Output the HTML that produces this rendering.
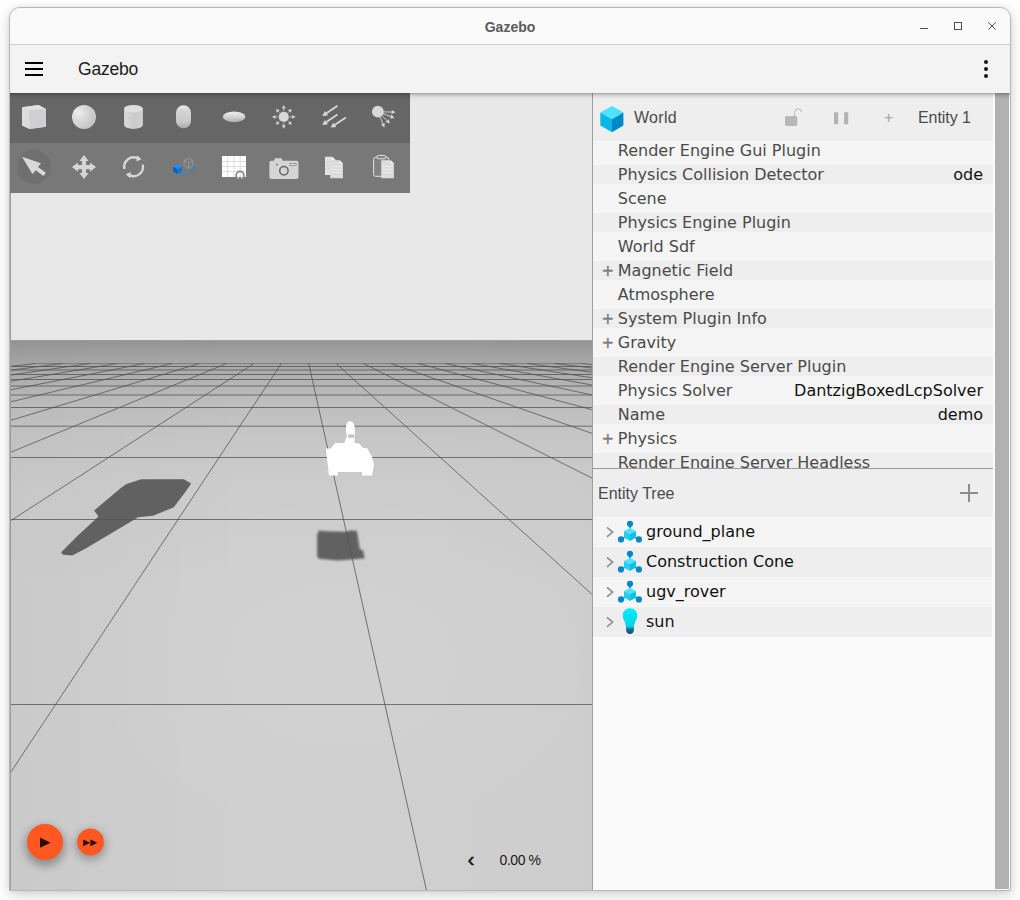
<!DOCTYPE html>
<html lang="en"><head><meta charset="utf-8"><title>Gazebo</title>
<style>
html,body{margin:0;padding:0;background:#fff;width:1020px;height:900px;overflow:hidden}
body{font-family:"Liberation Sans",sans-serif;position:relative}
#win{position:absolute;left:9px;top:7px;width:1002px;height:884px;box-sizing:border-box;border:1px solid #b6b6b6;border-radius:11px 11px 0 0;overflow:hidden;background:#fafafa;box-shadow:0 4px 14px rgba(0,0,0,.18),0 0 5px rgba(0,0,0,.06)}
#in{position:absolute;left:-10px;top:-8px;width:1020px;height:900px}
#in>*{position:absolute}
#titlebar{left:10px;top:8px;width:1000px;height:36px;background:#fafafa;border-bottom:1px solid #cdcdcd}
#title{left:10px;top:9px;width:1000px;height:36px;line-height:37px;text-align:center;font-weight:bold;font-size:14px;color:#5b5b5b}
#appbar{left:10px;top:45px;width:1000px;height:48px;background:#f3f3f3;z-index:5}
#apptitle{left:78px;top:46px;height:48px;line-height:47px;font-size:17.5px;letter-spacing:-.2px;color:#1c1c1c;z-index:6}
.hb{left:25px;width:18px;height:2px;background:#000;z-index:6}
.dot{left:984px;width:4px;height:4px;border-radius:2px;background:#161616;z-index:6}
#scene{left:10px;top:93px;width:582px;height:797px;background:#e8e8e8;overflow:hidden}
#ledge{left:10px;top:193px;width:1px;height:697px;background:#9c9c9c;z-index:3}
#tshadow{left:10px;top:93px;width:1000px;height:7px;z-index:4;background:linear-gradient(to bottom,rgba(0,0,0,.31) 0,rgba(0,0,0,.22) 1px,rgba(0,0,0,.15) 2px,rgba(0,0,0,.09) 3px,rgba(0,0,0,.05) 4px,rgba(0,0,0,.02) 5.5px,rgba(0,0,0,0) 7px)}
#ground{position:absolute;left:0;top:247px;width:582px;height:550px;background:radial-gradient(ellipse 300px 200px at 331px 325px,rgba(255,255,255,.05),rgba(255,255,255,0) 100%),linear-gradient(to right,rgba(0,0,0,.022),rgba(0,0,0,0) 42%,rgba(0,0,0,0) 65%,rgba(0,0,0,.008)),linear-gradient(to bottom,#a8a8a8 0px,#969696 1px,#9e9e9e 10px,#a9a9a9 24px,#bdbdbd 60px,#c6c6c6 95px,#cccccc 145px,#cfcfcf 245px,#cfcfcf 550px)}
#scene svg.g{position:absolute;left:0;top:0}
#shapes1{left:10px;top:93px;width:400px;height:50px;background:#666}
#shapes2{left:10px;top:143px;width:400px;height:50px;background:#787878}
#split{left:592px;top:93px;width:1px;height:797px;background:#9e9e9e}
#panel{left:593px;top:93px;width:417px;height:797px;background:#fafafa}
#whead{left:593px;top:93px;width:400px;height:48px;background:#eeeeee}
#clist{left:593px;top:141px;width:400px;height:327px;background:#f5f5f5;overflow:hidden}
#clist>*{position:absolute}
.band{left:0;width:400px;height:19px;background:#eeeeee;margin-top:-141px}
.cname,.cval,.cplus{font-family:"DejaVu Sans",sans-serif;font-size:16px;line-height:19px;height:19px;white-space:nowrap;margin-top:-141px}
.cname{left:24.8px;color:#4a4a4a}
.cval{right:10px;color:#111}
.cplus{left:8.6px;color:#777;font-size:15px;padding-top:1px;-webkit-text-stroke:.3px #777}
#sep{left:593px;top:468px;width:400px;height:1px;background:#9a9a9a}
#thead{left:593px;top:469px;width:400px;height:48px;background:#eeeeee}
#ttitle{left:598px;top:469px;height:48px;line-height:49px;font-size:16px;color:#4a4a4a}
#tlist{left:593px;top:517px;width:399px;height:120px;background:#f5f5f5}
#tlist>*{position:absolute}
.tband{left:0;width:399px;height:30px;background:#eeeeee;margin-top:-517px}
.chev{left:12px;margin-top:-517px}
.ticon{left:24px;margin-top:-517px}
.tname{left:53px;font-family:"DejaVu Sans",sans-serif;font-size:16px;line-height:29px;height:30px;color:#111;white-space:nowrap;margin-top:-517px}
#sbar{left:995px;top:93px;width:14px;height:796px;background:#b1b1b1}
#wname{left:634px;top:94px;height:48px;line-height:48px;font-size:16px;letter-spacing:.3px;color:#4a4a4a}
#ename{left:918px;top:94px;height:48px;line-height:48px;font-size:16px;letter-spacing:-.05px;color:#4a4a4a}
#wplus{left:884px;top:94px;height:48px;line-height:48px;font-size:16px;color:#a8a8a8}
#pct{left:499.6px;top:850px;font-size:14px;letter-spacing:-.45px;color:#1a1a1a;line-height:20px}
#lt{left:467.6px;top:849px;font-size:21px;font-weight:normal;-webkit-text-stroke:.45px #111;color:#111;line-height:20px}
</style></head><body>
<div id="win"><div id="in">
<div id="titlebar"></div>
<div id="title">Gazebo</div>
<svg style="left:915px;top:17px" width="90" height="20" viewBox="915 17 90 20" fill="none" stroke="#4d4d4d" stroke-width="1">
<line x1="920" y1="28.5" x2="928" y2="28.5"/><rect x="954.5" y="22.5" width="7" height="7"/><path d="M988.3 22.3 L995.7 29.7 M995.7 22.3 L988.3 29.7"/></svg>
<div id="appbar"></div><div id="tshadow"></div><div id="ledge"></div>
<div class="hb" style="top:62px"></div><div class="hb" style="top:68px"></div><div class="hb" style="top:74px"></div>
<div id="apptitle">Gazebo</div>
<div class="dot" style="top:60px"></div><div class="dot" style="top:67px"></div><div class="dot" style="top:74px"></div>

<div id="scene">
<div id="ground"></div>
<svg class="g" width="582" height="797" viewBox="0 0 582 797">
<g stroke="#4e4e4e" stroke-width="1" stroke-opacity=".74">
<line x1="24.2" y1="270.6" x2="573.2" y2="270.6" stroke-opacity=".5"/>
<line x1="-0.8" y1="273.5" x2="599.6" y2="273.5"/>
<line x1="-31.0" y1="277.0" x2="631.3" y2="277.0"/>
<line x1="-69.9" y1="281.5" x2="672.2" y2="281.5"/>
<line x1="-113.0" y1="286.5" x2="717.6" y2="286.5"/>
<line x1="-169.1" y1="293.0" x2="776.6" y2="293.0"/>
<line x1="-246.8" y1="302.0" x2="858.3" y2="302.0"/>
<line x1="-354.7" y1="314.5" x2="971.8" y2="314.5"/>
<line x1="-516.1" y1="333.2" x2="1141.5" y2="333.2"/>
<line x1="-786.3" y1="364.5" x2="1425.7" y2="364.5"/>
<line x1="-1321.4" y1="426.5" x2="1988.6" y2="426.5"/>
<line x1="-2918.3" y1="611.5" x2="3668.1" y2="611.5"/>
<line x1="25.1" y1="270.5" x2="-4605.7" y2="807.0"/>
<line x1="52.4" y1="270.5" x2="-4103.3" y2="807.0"/>
<line x1="79.8" y1="270.5" x2="-3600.8" y2="807.0"/>
<line x1="107.2" y1="270.5" x2="-3098.4" y2="807.0"/>
<line x1="134.5" y1="270.5" x2="-2596.0" y2="807.0"/>
<line x1="161.9" y1="270.5" x2="-2093.5" y2="807.0"/>
<line x1="189.3" y1="270.5" x2="-1591.1" y2="807.0"/>
<line x1="216.6" y1="270.5" x2="-1088.7" y2="807.0"/>
<line x1="244.0" y1="270.5" x2="-586.3" y2="807.0"/>
<line x1="271.3" y1="270.5" x2="-83.8" y2="807.0"/>
<line x1="298.7" y1="270.5" x2="418.6" y2="807.0"/>
<line x1="326.1" y1="270.5" x2="921.0" y2="807.0"/>
<line x1="353.4" y1="270.5" x2="1423.5" y2="807.0"/>
<line x1="380.8" y1="270.5" x2="1925.9" y2="807.0"/>
<line x1="408.2" y1="270.5" x2="2428.3" y2="807.0"/>
<line x1="435.5" y1="270.5" x2="2930.8" y2="807.0"/>
<line x1="462.9" y1="270.5" x2="3433.2" y2="807.0"/>
<line x1="490.2" y1="270.5" x2="3935.6" y2="807.0"/>
<line x1="517.6" y1="270.5" x2="4438.1" y2="807.0"/>
<line x1="545.0" y1="270.5" x2="4940.5" y2="807.0"/>
<line x1="572.3" y1="270.5" x2="5442.9" y2="807.0"/>
</g>
<polygon points="131.2,386.3 173.8,386.3 181.2,390.4 174.6,399.9 163.5,414.6 142.9,422.7 128.2,424.2 75.3,455.8 62.1,462.4 53.2,461.7 51.0,459.5 67.9,442.6 88.5,423.5 84.1,417.6 112.1,394.1 116.5,391.1" fill="#525252" fill-opacity=".88" filter="url(#bl)"/>
<polygon points="308.8,437.4 315.9,438.3 336.2,438.8 339.7,437.4 346.8,437.7 349.9,456.4 353.0,457.3 354.7,465.2 341.5,466.6 327.4,467.5 308.8,465.7 307.1,463.5 307.1,442.3" fill="#525252" fill-opacity=".88" filter="url(#bl2)"/>
<defs><filter id="bl" x="-5%" y="-5%" width="110%" height="110%"><feGaussianBlur stdDeviation="0.55"/></filter><filter id="bl2" x="-10%" y="-10%" width="120%" height="120%"><feGaussianBlur stdDeviation="0.8"/></filter></defs>
<polygon points="340.0,328.0 337.2,329.5 336.0,333.0 336.0,339.0 337.0,343.0 334.5,349.0 334.5,350.0 325.0,350.0 322.0,354.0 321.0,355.5 316.2,355.5 316.2,359.0 319.0,382.5 328.0,382.5 328.0,379.0 352.0,379.0 352.0,382.5 362.0,382.5 364.0,372.0 362.0,364.0 357.0,355.0 353.0,355.0 349.0,350.5 344.5,350.0 344.5,343.0 345.0,339.0 344.5,333.0 343.0,329.5" fill="#fff"/>
<rect x="338" y="341.5" width="6" height="3.3" fill="#c4c4c4"/>
</svg>
</div>
<div id="shapes1"></div><div id="shapes2"></div>
<svg style="left:10px;top:93px;z-index:2" width="400" height="100" viewBox="10 93 400 100">
<defs>
<radialGradient id="sph" cx="0.27" cy="0.33" r="0.75"><stop offset="0" stop-color="#efefef"/><stop offset="0.45" stop-color="#d9d9d9"/><stop offset="1" stop-color="#c4c4c4"/></radialGradient>
<linearGradient id="cyl" x1="0" y1="0" x2="1" y2="0"><stop offset="0" stop-color="#dadada"/><stop offset="0.55" stop-color="#cacaca"/><stop offset="1" stop-color="#d0d0d0"/></linearGradient>
<linearGradient id="cap" x1="0" y1="0" x2="0" y2="1"><stop offset="0" stop-color="#ececec"/><stop offset="0.25" stop-color="#d4d4d4"/><stop offset="0.7" stop-color="#cacaca"/><stop offset="0.9" stop-color="#b6b6b6"/><stop offset="1" stop-color="#acacac"/></linearGradient>
<linearGradient id="ell" x1="0" y1="0" x2="0" y2="1"><stop offset="0" stop-color="#efefef"/><stop offset="0.5" stop-color="#d4d4d4"/><stop offset="1" stop-color="#aeaeae"/></linearGradient>
</defs>
<polygon points="22,107.3 38.5,105 45.9,109 45.9,126.7 29.7,128.9 22,125.4" fill="#d8d8d8"/>
<polygon points="22,107.3 38.5,105 45.9,109 29.2,110.2" fill="#e0e0e0"/>
<polygon points="22,107.3 29.2,110.2 29.7,128.9 22,125.4" fill="#dcdcdc"/>
<polygon points="29.2,110.2 45.9,109 45.9,126.7 29.7,128.9" fill="#d0d0d2"/>
<circle cx="84" cy="117" r="12" fill="url(#sph)"/>
<path d="M124.1 108.8 V125.1 A9.4 3.8 0 0 0 142.9 125.1 V108.8 Z" fill="url(#cyl)"/>
<ellipse cx="133.5" cy="108.8" rx="9.4" ry="3.8" fill="#dedede"/>
<rect x="176" y="105.3" width="15" height="23" rx="7.5" fill="url(#cap)"/>
<ellipse cx="234.1" cy="116.8" rx="11.3" ry="5.4" fill="url(#ell)"/>
<circle cx="283.8" cy="116.9" r="5.1" fill="#d8d8d8"/>
<line x1="290.0" y1="116.9" x2="292.2" y2="116.9" stroke="#d8d8d8" stroke-width="0.9"/><polygon points="295.6,116.9 292.2,118.8 292.2,115.0" fill="#d8d8d8"/>
<line x1="288.2" y1="121.3" x2="289.3" y2="122.4" stroke="#d8d8d8" stroke-width="0.9"/><polygon points="291.7,124.8 288.0,123.8 290.7,121.1" fill="#d8d8d8"/>
<line x1="283.8" y1="123.1" x2="283.8" y2="125.3" stroke="#d8d8d8" stroke-width="0.9"/><polygon points="283.8,128.7 281.9,125.3 285.7,125.3" fill="#d8d8d8"/>
<line x1="279.4" y1="121.3" x2="278.3" y2="122.4" stroke="#d8d8d8" stroke-width="0.9"/><polygon points="275.9,124.8 276.9,121.1 279.6,123.8" fill="#d8d8d8"/>
<line x1="277.6" y1="116.9" x2="275.4" y2="116.9" stroke="#d8d8d8" stroke-width="0.9"/><polygon points="272.0,116.9 275.4,115.0 275.4,118.8" fill="#d8d8d8"/>
<line x1="279.4" y1="112.5" x2="278.3" y2="111.4" stroke="#d8d8d8" stroke-width="0.9"/><polygon points="275.9,109.0 279.6,110.0 276.9,112.7" fill="#d8d8d8"/>
<line x1="283.8" y1="110.7" x2="283.8" y2="108.5" stroke="#d8d8d8" stroke-width="0.9"/><polygon points="283.8,105.1 285.7,108.5 281.9,108.5" fill="#d8d8d8"/>
<line x1="288.2" y1="112.5" x2="289.3" y2="111.4" stroke="#d8d8d8" stroke-width="0.9"/><polygon points="291.7,109.0 290.7,112.7 288.0,110.0" fill="#d8d8d8"/>
<line x1="337.5" y1="105.8" x2="326.4" y2="113.3" stroke="#d8d8d8" stroke-width="1.75"/><polygon points="322.3,116.1 324.9,111.1 328.0,115.5" fill="#d8d8d8"/>
<line x1="337.5" y1="114.6" x2="326.4" y2="122.1" stroke="#d8d8d8" stroke-width="1.75"/><polygon points="322.3,124.9 324.9,119.9 328.0,124.3" fill="#d8d8d8"/>
<line x1="345.9" y1="117.4" x2="334.9" y2="124.8" stroke="#d8d8d8" stroke-width="1.75"/><polygon points="330.7,127.6 333.3,122.6 336.4,127.1" fill="#d8d8d8"/>
<circle cx="377.9" cy="111.7" r="5.9" fill="#d8d8d8"/>
<line x1="377.9" y1="111.7" x2="391.6" y2="112.1" stroke="#d8d8d8" stroke-width="0.9"/><polygon points="395.6,112.2 391.5,114.1 391.7,110.1" fill="#d8d8d8"/>
<line x1="377.9" y1="111.7" x2="390.7" y2="116.5" stroke="#d8d8d8" stroke-width="0.9"/><polygon points="394.4,117.9 390.0,118.4 391.4,114.6" fill="#d8d8d8"/>
<line x1="377.9" y1="111.7" x2="387.1" y2="120.7" stroke="#d8d8d8" stroke-width="0.9"/><polygon points="390.0,123.5 385.7,122.1 388.5,119.3" fill="#d8d8d8"/>
<line x1="377.9" y1="111.7" x2="382.9" y2="123.7" stroke="#d8d8d8" stroke-width="0.9"/><polygon points="384.4,127.4 381.0,124.5 384.7,122.9" fill="#d8d8d8"/>
<circle cx="33.9" cy="166.7" r="17" fill="#6f6f6f"/>
<polygon points="22,156.8 41,163.2 38,167.1 45.9,172.7 43.4,175.9 35.8,170.2 32.4,174" fill="#d9d9d9"/>
<polygon points="84.00,155.10 88.60,161.10 86.05,161.10 86.05,165.05 90.00,165.05 90.00,162.50 96.00,167.10 90.00,171.70 90.00,169.15 86.05,169.15 86.05,173.10 88.60,173.10 84.00,179.10 79.40,173.10 81.95,173.10 81.95,169.15 78.00,169.15 78.00,171.70 72.00,167.10 78.00,162.50 78.00,165.05 81.95,165.05 81.95,161.10 79.40,161.10" fill="#d6d6d6"/>
<g fill="none" stroke="#d6d6d6" stroke-width="2.4"><path d="M124.5 169.0 A9.3 9.3 0 0 1 137.8 158.5"/><path d="M142.7 164.6 A9.3 9.3 0 0 1 129.4 175.1"/></g>
<polygon points="137.0,155.3 141.5,159.3 136.4,161.6" fill="#d6d6d6"/>
<polygon points="130.2,178.3 125.7,174.3 130.8,172.0" fill="#d6d6d6"/>
<g fill="none" stroke="#9ba5ae" stroke-width="0.7"><polygon points="188.5,158.2 192.9,160.7 192.9,165.8 188.5,168.3 184.1,165.8 184.1,160.7"/><path d="M184.1 160.7 L188.5 163.2 L192.9 160.7 M188.5 163.2 V168.3"/></g>
<polyline points="180.7,173.5 183.6,175.4 194.9,168.6 191.9,167" fill="none" stroke="#1e88e5" stroke-width="1.1" stroke-dasharray="1.6 0.7"/>
<polygon points="177.5,164.3 181.9,166.7 177.5,169.2 173.1,166.7" fill="#1e90ff"/>
<polygon points="173.1,166.7 177.5,169.2 177.5,174 173.1,171.5" fill="#0a5cb8"/>
<polygon points="181.9,166.7 177.5,169.2 177.5,174 181.9,171.5" fill="#0f74d8"/>
<rect x="222" y="156" width="24" height="21" fill="#fff"/>
<path d="M227.7 156V177M233.9 156V177M240.2 156V177M222 161.5H246M222 166.5H246M222 171.6H246" stroke="#dcdcdc" stroke-width="1" fill="none"/>
<path d="M236.2 178.6 V175.2 A3.8 3.8 0 0 1 243.8 175.2 V178.6" fill="none" stroke="#858585" stroke-width="1.7"/>
<path d="M238.3 178.6 V175.6 A1.7 1.7 0 0 1 241.7 175.6 V178.6" fill="none" stroke="#f4f4f4" stroke-width="1"/>
<path d="M271.4 160.7 H274 L275 158.3 H281.6 L282.6 160.7 H296.5 A2 2 0 0 1 298.5 162.7 V176.9 A2 2 0 0 1 296.5 178.9 H271.4 A2 2 0 0 1 269.4 176.9 V162.7 A2 2 0 0 1 271.4 160.7 Z" fill="#d5d5d5"/>
<circle cx="283.9" cy="170.8" r="4.2" fill="none" stroke="#666" stroke-width="1.5"/>
<circle cx="277" cy="164.6" r="0.9" fill="#6a6a6a"/>
<rect x="289.9" y="163.4" width="6.2" height="2.2" fill="#e6e6e6" stroke="#777" stroke-width="0.7"/>
<path d="M325 156.8 H332.3 L335.5 160.0 V175.0 H325 Z" fill="#e2e2e2"/><path d="M332.3 156.8 V160.0 H335.5 Z" fill="#f2f2f2"/>
<path d="M326 162.5H330M326 165.5H330M326 168.5H330" stroke="#d2d2d2" stroke-width="1"/>
<path d="M330.2 160.2 H339.7 L342.9 163.39999999999998 V178.2 H330.2 Z" fill="#dcdcdc"/><path d="M339.7 160.2 V163.39999999999998 H342.9 Z" fill="#f2f2f2"/>
<path d="M331.5 166.5H341.8M331.5 169.5H341.8M331.5 172.5H341.8" stroke="#ececec" stroke-width="1"/>
<rect x="373.6" y="157.3" width="15.2" height="19" rx="2" fill="#828282" stroke="#e2e2e2" stroke-width="1"/>
<rect x="376.9" y="155.4" width="9" height="3.4" rx="1.7" fill="#828282" stroke="#e2e2e2" stroke-width="1"/>
<path d="M381.2 160.2 H390.7 L393.9 163.39999999999998 V178.2 H381.2 Z" fill="#dcdcdc"/><path d="M390.7 160.2 V163.39999999999998 H393.9 Z" fill="#f2f2f2"/>
<path d="M382.5 166.5H392.8M382.5 169.5H392.8M382.5 172.5H392.8" stroke="#ececec" stroke-width="1"/>
</svg>
<div id="split"></div>
<div id="panel"></div>
<div id="whead"></div>
<div id="wname">World</div>
<div id="wplus">+</div>
<div id="ename">Entity 1</div>
<svg style="left:596px;top:100px" width="260" height="36" viewBox="596 100 260 36">
<polygon points="612,106 623.4,112.6 612,119.2 600.3,112.6" fill="#4de3ff"/>
<polygon points="600.3,112.6 612,119.2 612,132.3 600.3,125.5" fill="#0bb6e8"/>
<polygon points="623.4,112.6 612,119.2 612,132.3 623.4,125.5" fill="#0288c7"/>
<rect x="785" y="116" width="12.3" height="10" rx="1.6" fill="#b8b8b8"/>
<path d="M794.7 116.3 V112.3 A3.4 3.4 0 0 1 801.5 112.3" fill="none" stroke="#b8b8b8" stroke-width="1"/>
<rect x="834" y="112.2" width="4.1" height="12" fill="#b3b3b3"/><rect x="844.1" y="112.2" width="4.1" height="12" fill="#b3b3b3"/>
</svg>
<div id="clist">
<div class="cname" style="top:141px">Render Engine Gui Plugin</div>
<div class="band" style="top:165px"></div>
<div class="cname" style="top:165px">Physics Collision Detector</div>
<div class="cval" style="top:165px">ode</div>
<div class="cname" style="top:189px">Scene</div>
<div class="band" style="top:213px"></div>
<div class="cname" style="top:213px">Physics Engine Plugin</div>
<div class="cname" style="top:237px">World Sdf</div>
<div class="band" style="top:261px"></div>
<div class="cplus" style="top:261px">+</div>
<div class="cname" style="top:261px">Magnetic Field</div>
<div class="cname" style="top:285px">Atmosphere</div>
<div class="band" style="top:309px"></div>
<div class="cplus" style="top:309px">+</div>
<div class="cname" style="top:309px">System Plugin Info</div>
<div class="cplus" style="top:333px">+</div>
<div class="cname" style="top:333px">Gravity</div>
<div class="band" style="top:357px"></div>
<div class="cname" style="top:357px">Render Engine Server Plugin</div>
<div class="cname" style="top:381px">Physics Solver</div>
<div class="cval" style="top:381px">DantzigBoxedLcpSolver</div>
<div class="band" style="top:405px"></div>
<div class="cname" style="top:405px">Name</div>
<div class="cval" style="top:405px">demo</div>
<div class="cplus" style="top:429px">+</div>
<div class="cname" style="top:429px">Physics</div>
<div class="band" style="top:453px"></div>
<div class="cname" style="top:453px">Render Engine Server Headless</div>
</div>
<div id="sep"></div>
<div id="thead"></div>
<div id="ttitle">Entity Tree</div>
<svg style="left:959px;top:483px" width="20" height="20" viewBox="959 483 20 20"><path d="M960 493H978M969 484V502" stroke="#8c8c8c" stroke-width="2" fill="none"/></svg>
<div id="tlist">
<svg class="chev" style="top:526px" width="10" height="12" viewBox="0 0 10 12"><polyline points="2,1.4 7.6,6.1 2,10.8" fill="none" stroke="#929292" stroke-width="1.7"/></svg>
<svg class="ticon" style="top:519px" width="26" height="24" viewBox="617 519 26 24">
<g stroke="#0288c7" stroke-width="1.4"><line x1="630" y1="524" x2="630" y2="530"/><line x1="621" y1="539.4" x2="626" y2="536.6"/><line x1="638.9" y1="539.4" x2="634" y2="536.6"/></g>
<polygon points="630,528 636,530.9 630,534 624,530.9" fill="#4fe3ff"/>
<polygon points="624,530.9 630,534 630,540.9 624,537.6" fill="#25cdf0"/>
<polygon points="636,530.9 630,534 630,540.9 636,537.6" fill="#12c0e6"/>
<g fill="#0288c7"><circle cx="630" cy="523.8" r="3.1"/><circle cx="621" cy="539.4" r="3.1"/><circle cx="638.9" cy="539.4" r="3.1"/></g>
</svg>
<div class="tname" style="top:517px">ground_plane</div>
<div class="tband" style="top:547px"></div>
<svg class="chev" style="top:556px" width="10" height="12" viewBox="0 0 10 12"><polyline points="2,1.4 7.6,6.1 2,10.8" fill="none" stroke="#929292" stroke-width="1.7"/></svg>
<svg class="ticon" style="top:549px" width="26" height="24" viewBox="617 519 26 24">
<g stroke="#0288c7" stroke-width="1.4"><line x1="630" y1="524" x2="630" y2="530"/><line x1="621" y1="539.4" x2="626" y2="536.6"/><line x1="638.9" y1="539.4" x2="634" y2="536.6"/></g>
<polygon points="630,528 636,530.9 630,534 624,530.9" fill="#4fe3ff"/>
<polygon points="624,530.9 630,534 630,540.9 624,537.6" fill="#25cdf0"/>
<polygon points="636,530.9 630,534 630,540.9 636,537.6" fill="#12c0e6"/>
<g fill="#0288c7"><circle cx="630" cy="523.8" r="3.1"/><circle cx="621" cy="539.4" r="3.1"/><circle cx="638.9" cy="539.4" r="3.1"/></g>
</svg>
<div class="tname" style="top:547px">Construction Cone</div>
<svg class="chev" style="top:586px" width="10" height="12" viewBox="0 0 10 12"><polyline points="2,1.4 7.6,6.1 2,10.8" fill="none" stroke="#929292" stroke-width="1.7"/></svg>
<svg class="ticon" style="top:579px" width="26" height="24" viewBox="617 519 26 24">
<g stroke="#0288c7" stroke-width="1.4"><line x1="630" y1="524" x2="630" y2="530"/><line x1="621" y1="539.4" x2="626" y2="536.6"/><line x1="638.9" y1="539.4" x2="634" y2="536.6"/></g>
<polygon points="630,528 636,530.9 630,534 624,530.9" fill="#4fe3ff"/>
<polygon points="624,530.9 630,534 630,540.9 624,537.6" fill="#25cdf0"/>
<polygon points="636,530.9 630,534 630,540.9 636,537.6" fill="#12c0e6"/>
<g fill="#0288c7"><circle cx="630" cy="523.8" r="3.1"/><circle cx="621" cy="539.4" r="3.1"/><circle cx="638.9" cy="539.4" r="3.1"/></g>
</svg>
<div class="tname" style="top:577px">ugv_rover</div>
<div class="tband" style="top:607px"></div>
<svg class="chev" style="top:616px" width="10" height="12" viewBox="0 0 10 12"><polyline points="2,1.4 7.6,6.1 2,10.8" fill="none" stroke="#929292" stroke-width="1.7"/></svg>
<svg class="ticon" style="top:603.6px" width="26" height="30" viewBox="617 -3 26 30">
<defs><linearGradient id="bg1" x1="0" y1="0" x2="0" y2="1"><stop offset="0" stop-color="#00eefa"/><stop offset="1" stop-color="#00d4e4"/></linearGradient>
<linearGradient id="bg2" x1="0" y1="0" x2="0" y2="1"><stop offset="0" stop-color="#0a8fb0"/><stop offset="0.18" stop-color="#1aa8dc"/><stop offset="0.34" stop-color="#0a7797"/><stop offset="1" stop-color="#065068"/></linearGradient></defs>
<path d="M630 1.2 C634.3 1.2 637.3 4.6 637.3 8.6 C637.3 12.6 634.4 15 634.1 19.6 L625.9 19.6 C625.6 15 622.7 12.6 622.7 8.6 C622.7 4.6 625.7 1.2 630 1.2 Z" fill="url(#bg1)"/>
<path d="M625.9 19.4 L634.1 19.4 L633.8 24 C633.4 26 631.6 27 630 27 C628.4 27 626.6 26 626.2 24 Z" fill="url(#bg2)"/>
</svg>
<div class="tname" style="top:607px">sun</div>
</div>
<div id="sbar"></div>
<svg style="left:11px;top:806px" width="120" height="84" viewBox="11 806 120 84">
<defs><filter id="ps" x="-50%" y="-50%" width="200%" height="200%"><feGaussianBlur stdDeviation="4.5"/></filter></defs>
<circle cx="45" cy="846" r="20" fill="#000" opacity=".3" filter="url(#ps)"/>
<circle cx="90.5" cy="845" r="15" fill="#000" opacity=".27" filter="url(#ps)"/>
<circle cx="45" cy="842" r="18" fill="#ff5722"/>
<circle cx="90.5" cy="842" r="13.4" fill="#ff5722"/>
<polygon points="40,837.6 40,847.8 50.6,842.7" fill="#280c04"/>
<polygon points="83.2,839.4 83.2,846.2 90.2,842.8" fill="#280c04"/>
<polygon points="90.4,839.4 90.4,846.2 97.4,842.8" fill="#280c04"/>
</svg>
<div id="lt">&#8249;</div>
<div id="pct">0.00 %</div>
</div></div>
</body></html>
